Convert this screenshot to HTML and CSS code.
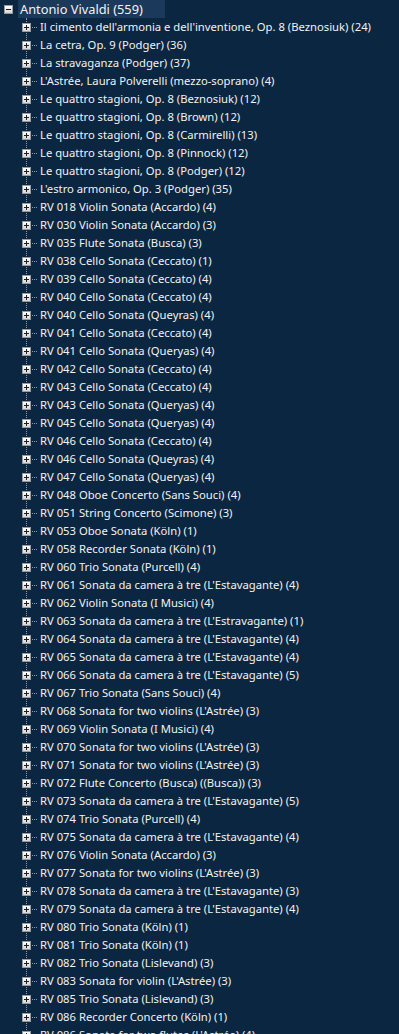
FILE: index.html
```html
<!DOCTYPE html>
<html lang="en">

<head>
	<meta charset="utf-8" />
	<title>Library</title>
	<link rel="stylesheet" href="styles.css">
</head>

<body>
	<ul class="tree">
		<li>
			<div class="row root">
				<span class="box minus"></span>
				<span class="label selected">Antonio Vivaldi (559)</span>
			</div>
			<ul class="children">
				<li class="row"><span class="box"></span><span class="dots"></span><span class="label">Il cimento dell'armonia e dell'inventione, Op. 8 (Beznosiuk) (24)</span></li>
				<li class="row"><span class="box"></span><span class="dots"></span><span class="label">La cetra, Op. 9 (Podger) (36)</span></li>
				<li class="row"><span class="box"></span><span class="dots"></span><span class="label">La stravaganza (Podger) (37)</span></li>
				<li class="row"><span class="box"></span><span class="dots"></span><span class="label">L'Astrée, Laura Polverelli (mezzo-soprano) (4)</span></li>
				<li class="row"><span class="box"></span><span class="dots"></span><span class="label">Le quattro stagioni, Op. 8 (Beznosiuk) (12)</span></li>
				<li class="row"><span class="box"></span><span class="dots"></span><span class="label">Le quattro stagioni, Op. 8 (Brown) (12)</span></li>
				<li class="row"><span class="box"></span><span class="dots"></span><span class="label">Le quattro stagioni, Op. 8 (Carmirelli) (13)</span></li>
				<li class="row"><span class="box"></span><span class="dots"></span><span class="label">Le quattro stagioni, Op. 8 (Pinnock) (12)</span></li>
				<li class="row"><span class="box"></span><span class="dots"></span><span class="label">Le quattro stagioni, Op. 8 (Podger) (12)</span></li>
				<li class="row"><span class="box"></span><span class="dots"></span><span class="label">L'estro armonico, Op. 3 (Podger) (35)</span></li>
				<li class="row"><span class="box"></span><span class="dots"></span><span class="label">RV 018 Violin Sonata (Accardo) (4)</span></li>
				<li class="row"><span class="box"></span><span class="dots"></span><span class="label">RV 030 Violin Sonata (Accardo) (3)</span></li>
				<li class="row"><span class="box"></span><span class="dots"></span><span class="label">RV 035 Flute Sonata (Busca) (3)</span></li>
				<li class="row"><span class="box"></span><span class="dots"></span><span class="label">RV 038 Cello Sonata (Ceccato) (1)</span></li>
				<li class="row"><span class="box"></span><span class="dots"></span><span class="label">RV 039 Cello Sonata (Ceccato) (4)</span></li>
				<li class="row"><span class="box"></span><span class="dots"></span><span class="label">RV 040 Cello Sonata (Ceccato) (4)</span></li>
				<li class="row"><span class="box"></span><span class="dots"></span><span class="label">RV 040 Cello Sonata (Queyras) (4)</span></li>
				<li class="row"><span class="box"></span><span class="dots"></span><span class="label">RV 041 Cello Sonata (Ceccato) (4)</span></li>
				<li class="row"><span class="box"></span><span class="dots"></span><span class="label">RV 041 Cello Sonata (Queryas) (4)</span></li>
				<li class="row"><span class="box"></span><span class="dots"></span><span class="label">RV 042 Cello Sonata (Ceccato) (4)</span></li>
				<li class="row"><span class="box"></span><span class="dots"></span><span class="label">RV 043 Cello Sonata (Ceccato) (4)</span></li>
				<li class="row"><span class="box"></span><span class="dots"></span><span class="label">RV 043 Cello Sonata (Queryas) (4)</span></li>
				<li class="row"><span class="box"></span><span class="dots"></span><span class="label">RV 045 Cello Sonata (Queryas) (4)</span></li>
				<li class="row"><span class="box"></span><span class="dots"></span><span class="label">RV 046 Cello Sonata (Ceccato) (4)</span></li>
				<li class="row"><span class="box"></span><span class="dots"></span><span class="label">RV 046 Cello Sonata (Queyras) (4)</span></li>
				<li class="row"><span class="box"></span><span class="dots"></span><span class="label">RV 047 Cello Sonata (Queryas) (4)</span></li>
				<li class="row"><span class="box"></span><span class="dots"></span><span class="label">RV 048 Oboe Concerto (Sans Souci) (4)</span></li>
				<li class="row"><span class="box"></span><span class="dots"></span><span class="label">RV 051 String Concerto (Scimone) (3)</span></li>
				<li class="row"><span class="box"></span><span class="dots"></span><span class="label">RV 053 Oboe Sonata (Köln) (1)</span></li>
				<li class="row"><span class="box"></span><span class="dots"></span><span class="label">RV 058 Recorder Sonata (Köln) (1)</span></li>
				<li class="row"><span class="box"></span><span class="dots"></span><span class="label">RV 060 Trio Sonata (Purcell) (4)</span></li>
				<li class="row"><span class="box"></span><span class="dots"></span><span class="label">RV 061 Sonata da camera à tre (L'Estavagante) (4)</span></li>
				<li class="row"><span class="box"></span><span class="dots"></span><span class="label">RV 062 Violin Sonata (I Musici) (4)</span></li>
				<li class="row"><span class="box"></span><span class="dots"></span><span class="label">RV 063 Sonata da camera à tre (L'Estravagante) (1)</span></li>
				<li class="row"><span class="box"></span><span class="dots"></span><span class="label">RV 064 Sonata da camera à tre (L'Estavagante) (4)</span></li>
				<li class="row"><span class="box"></span><span class="dots"></span><span class="label">RV 065 Sonata da camera à tre (L'Estavagante) (4)</span></li>
				<li class="row"><span class="box"></span><span class="dots"></span><span class="label">RV 066 Sonata da camera à tre (L'Estavagante) (5)</span></li>
				<li class="row"><span class="box"></span><span class="dots"></span><span class="label">RV 067 Trio Sonata (Sans Souci) (4)</span></li>
				<li class="row"><span class="box"></span><span class="dots"></span><span class="label">RV 068 Sonata for two violins (L'Astrée) (3)</span></li>
				<li class="row"><span class="box"></span><span class="dots"></span><span class="label">RV 069 Violin Sonata (I Musici) (4)</span></li>
				<li class="row"><span class="box"></span><span class="dots"></span><span class="label">RV 070 Sonata for two violins (L'Astrée) (3)</span></li>
				<li class="row"><span class="box"></span><span class="dots"></span><span class="label">RV 071 Sonata for two violins (L'Astrée) (3)</span></li>
				<li class="row"><span class="box"></span><span class="dots"></span><span class="label">RV 072 Flute Concerto (Busca) ((Busca)) (3)</span></li>
				<li class="row"><span class="box"></span><span class="dots"></span><span class="label">RV 073 Sonata da camera à tre (L'Estavagante) (5)</span></li>
				<li class="row"><span class="box"></span><span class="dots"></span><span class="label">RV 074 Trio Sonata (Purcell) (4)</span></li>
				<li class="row"><span class="box"></span><span class="dots"></span><span class="label">RV 075 Sonata da camera à tre (L'Estavagante) (4)</span></li>
				<li class="row"><span class="box"></span><span class="dots"></span><span class="label">RV 076 Violin Sonata (Accardo) (3)</span></li>
				<li class="row"><span class="box"></span><span class="dots"></span><span class="label">RV 077 Sonata for two violins (L'Astrée) (3)</span></li>
				<li class="row"><span class="box"></span><span class="dots"></span><span class="label">RV 078 Sonata da camera à tre (L'Estavagante) (3)</span></li>
				<li class="row"><span class="box"></span><span class="dots"></span><span class="label">RV 079 Sonata da camera à tre (L'Estavagante) (4)</span></li>
				<li class="row"><span class="box"></span><span class="dots"></span><span class="label">RV 080 Trio Sonata (Köln) (1)</span></li>
				<li class="row"><span class="box"></span><span class="dots"></span><span class="label">RV 081 Trio Sonata (Köln) (1)</span></li>
				<li class="row"><span class="box"></span><span class="dots"></span><span class="label">RV 082 Trio Sonata (Lislevand) (3)</span></li>
				<li class="row"><span class="box"></span><span class="dots"></span><span class="label">RV 083 Sonata for violin (L'Astrée) (3)</span></li>
				<li class="row"><span class="box"></span><span class="dots"></span><span class="label">RV 085 Trio Sonata (Lislevand) (3)</span></li>
				<li class="row"><span class="box"></span><span class="dots"></span><span class="label">RV 086 Recorder Concerto (Köln) (1)</span></li>
				<li class="row"><span class="box"></span><span class="dots"></span><span class="label">RV 086 Sonata for two flutes (L'Astrée) (4)</span></li>
			</ul>
		</li>
	</ul>
</body>

</html>
```

FILE: styles.css
```css
html,
body {
	margin: 0;
	height: 1034px;
	overflow: hidden;
}

body {
	background-color: #0b2641;
	color: #f2f2f2;
	font-family: 'Noto Sans', 'Open Sans', sans-serif;
	font-size: 11.25px;
}

.tree,
.children {
	list-style: none;
	margin: 0;
	padding: 0;
}

.row {
	display: flex;
	align-items: center;
	height: 18px;
	white-space: nowrap;
}

.root {
	padding-left: 4px;
}

.children {
	margin-left: 26px;
	border-left: 1px dotted #8d9aa8;
}

.box {
	flex: none;
	width: 7px;
	height: 7px;
	border: 1px solid #9a9a9a;
	background:
		linear-gradient(#1e1e1e, #1e1e1e) center / 5px 1px no-repeat,
		linear-gradient(#1e1e1e, #1e1e1e) center / 1px 5px no-repeat,
		linear-gradient(#ffffff, #d8d8d8);
	margin-left: -5px;
}

.box.minus {
	margin-left: 0;
	background:
		linear-gradient(#1e1e1e, #1e1e1e) center / 5px 1px no-repeat,
		linear-gradient(#ffffff, #d8d8d8);
}

.dots {
	flex: none;
	width: 5px;
	margin-left: 1px;
	border-top: 1px dotted #8d9aa8;
}

.label {
	margin-left: 3px;
	line-height: 18px;
}

.selected {
	margin-left: 5px;
	padding: 0 22px 0 2px;
	font-size: 12.8px;
	background-color: #1b3a5b;
}
```
